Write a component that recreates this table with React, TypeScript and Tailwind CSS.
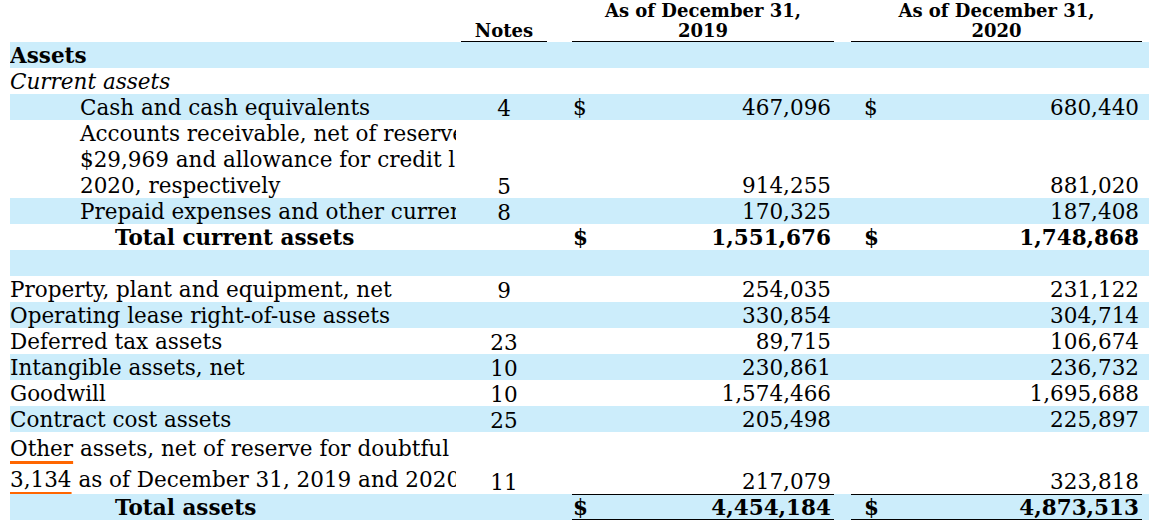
import React from 'react';

type RowProps = {
  label: React.ReactNode;
  indent?: number;
  bold?: boolean;
  italic?: boolean;
  notes?: string;
  v1?: string;
  v2?: string;
  dollar?: boolean;
  blue?: boolean;
  lineTop?: boolean;
  lineBottom?: boolean;
  leading?: string;
};

const Row: React.FC<RowProps> = ({
  label,
  indent = 0,
  bold,
  italic,
  notes,
  v1,
  v2,
  dollar,
  blue,
  lineTop,
  lineBottom,
  leading = 'leading-[26px]',
}) => {
  const weight = bold ? 'font-bold' : 'font-normal';
  const lines = `${lineTop ? 'border-t border-black' : 'border-t border-transparent'} ${
    lineBottom ? 'border-b border-black' : 'border-b border-transparent'
  }`;
  return (
    <div className={`flex items-end ${blue ? 'bg-[#ccedfb]' : 'bg-white'}`}>
      <div
        className={`w-[446px] shrink-0 overflow-hidden whitespace-nowrap ${leading} ${weight} ${
          italic ? 'italic' : ''
        }`}
        style={{ paddingLeft: indent }}
      >
        <div className="relative top-[1px]">{label}</div>
      </div>
      <div className="w-[96px] shrink-0 text-center leading-[22px]">{notes}</div>
      <div className="w-[20px] shrink-0" />
      <div className={`w-[262px] shrink-0 flex justify-between pl-[1px] pr-[3px] leading-[24px] ${weight} ${lines}`}>
        <span className="relative top-[1px]">{dollar ? '$' : ''}</span>
        <span className="relative top-[1px]">{v1}</span>
      </div>
      <div className="w-[17px] shrink-0" />
      <div className={`w-[291px] shrink-0 flex justify-between pl-[13px] pr-[3px] leading-[24px] ${weight} ${lines}`}>
        <span className="relative top-[1px]">{dollar ? '$' : ''}</span>
        <span className="relative top-[1px]">{v2}</span>
      </div>
    </div>
  );
};

const Mark: React.FC<{ children: React.ReactNode }> = ({ children }) => (
  <span className="underline decoration-[#ff6600] decoration-[3px] underline-offset-[5px]">{children}</span>
);

export default function App() {
  return (
    <div className="min-h-screen w-full bg-white pl-[10px] text-[21.5px] text-black font-['DejaVu_Serif',serif] overflow-hidden">
      {/* column headings */}
      <div className="flex items-end h-[42px] font-bold text-[18px] leading-[20px]">
        <div className="w-[446px] shrink-0" />
        <div className="w-[96px] shrink-0 px-[5px]">
          <div className="border-b border-black text-center">Notes</div>
        </div>
        <div className="w-[20px] shrink-0" />
        <div className="w-[262px] shrink-0 border-b border-black text-center">
          As of December 31,
          <br />
          2019
        </div>
        <div className="w-[17px] shrink-0" />
        <div className="w-[291px] shrink-0 border-b border-black text-center">
          As of December 31,
          <br />
          2020
        </div>
      </div>

      <Row label="Assets" bold blue />
      <Row label="Current assets" italic />
      <Row label="Cash and cash equivalents" indent={70} notes="4" dollar v1="467,096" v2="680,440" blue />
      <Row
        label={
          <>
            Accounts receivable, net of reserve
            <br />
            $29,969 and allowance for credit l
            <br />
            2020, respectively
          </>
        }
        indent={70}
        notes="5"
        v1="914,255"
        v2="881,020"
      />
      <Row label="Prepaid expenses and other curren" indent={70} notes="8" v1="170,325" v2="187,408" blue />
      <Row label="Total current assets" indent={105} bold dollar v1="1,551,676" v2="1,748,868" lineTop />
      <Row label={'\u00a0'} blue />
      <Row label="Property, plant and equipment, net" notes="9" v1="254,035" v2="231,122" />
      <Row label="Operating lease right-of-use assets" v1="330,854" v2="304,714" blue />
      <Row label="Deferred tax assets" notes="23" v1="89,715" v2="106,674" />
      <Row label="Intangible assets, net" notes="10" v1="230,861" v2="236,732" blue />
      <Row label="Goodwill" notes="10" v1="1,574,466" v2="1,695,688" />
      <Row label="Contract cost assets" notes="25" v1="205,498" v2="225,897" blue />
      <Row
        label={
          <>
            <Mark>Other</Mark> assets, net of reserve for doubtful a
            <br />
            <Mark>3,134</Mark> as of December 31, 2019 and 2020
          </>
        }
        leading="leading-[31px]"
        notes="11"
        v1="217,079"
        v2="323,818"
      />
      <Row label="Total assets" indent={105} bold dollar v1="4,454,184" v2="4,873,513" blue lineTop lineBottom />
    </div>
  );
}
